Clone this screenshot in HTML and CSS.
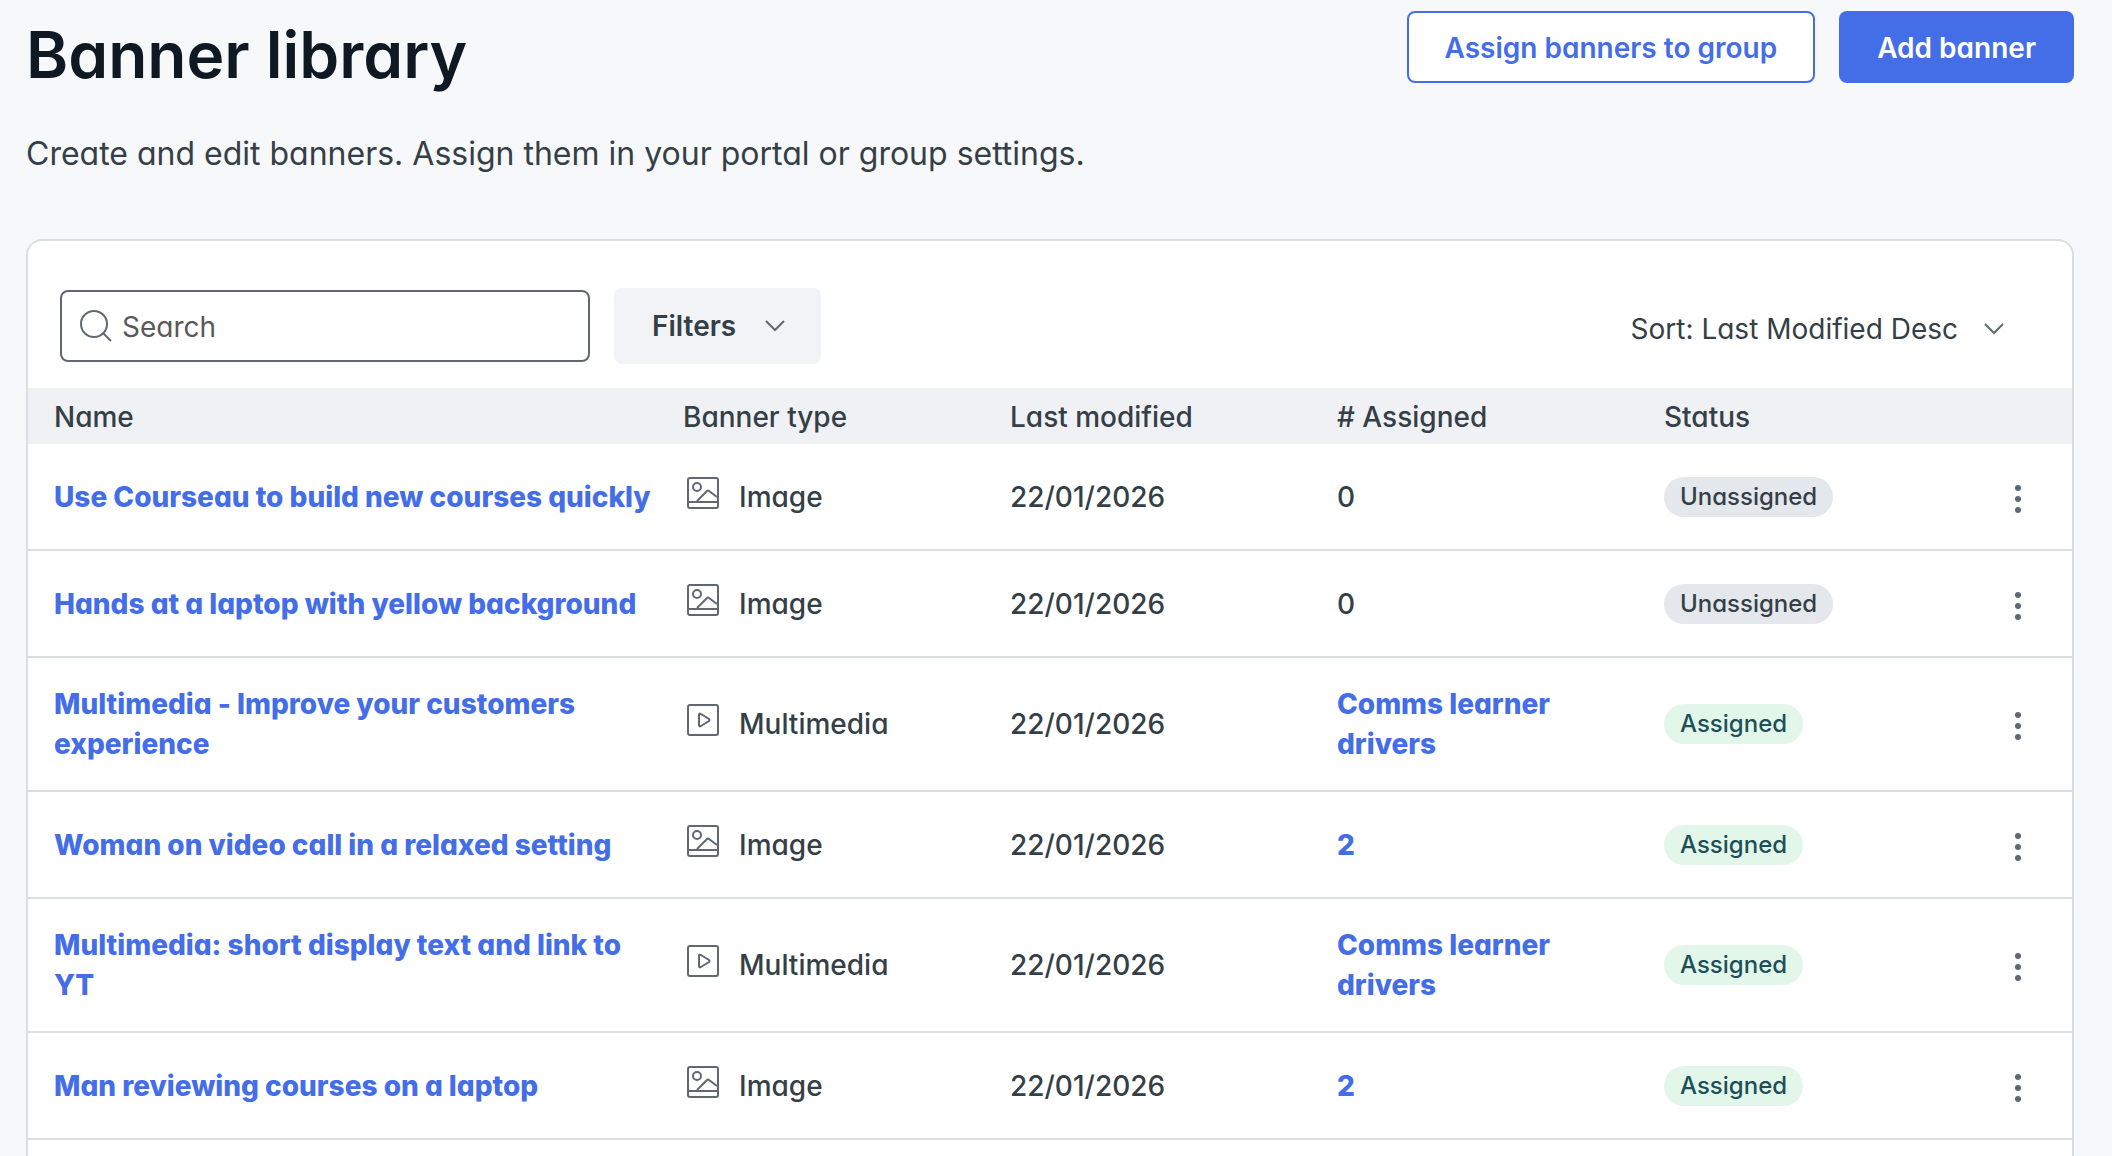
FILE: index.html
```
<!DOCTYPE html>
<html lang="en">

<head>
    <meta charset="UTF-8">
    <meta name="viewport" content="width=device-width, initial-scale=1.0">
    <title>Banner library</title>
    <link rel="stylesheet" href="styles.css">
</head>

<body>
    <!-- Shared icons -->
    <svg class="icon-defs" aria-hidden="true">
        <symbol id="icon-image" viewBox="0 0 32 32">
            <rect x="1" y="1" width="30" height="30" rx="2" />
            <circle cx="10" cy="10" r="4" />
            <path d="M1 25h30M10 24l10-10q1-1 2 0l8 6" />
        </symbol>
        <symbol id="icon-media" viewBox="0 0 32 32">
            <rect x="1" y="1" width="30" height="30" rx="2" />
            <path d="M12 11v10q0 2 2 1l8-5q1-1 0-2l-8-5q-2-1-2 1z" />
        </symbol>
        <symbol id="icon-search" viewBox="0 0 32 32">
            <circle cx="14" cy="14" r="13" />
            <path d="M23 23l8 8" />
        </symbol>
        <symbol id="icon-chevron" viewBox="0 0 20 12">
            <path d="M1 1l9 9 9-9" />
        </symbol>
        <symbol id="icon-dots" viewBox="0 0 6 28">
            <circle cx="3" cy="3" r="3" />
            <circle cx="3" cy="14" r="3" />
            <circle cx="3" cy="25" r="3" />
        </symbol>
    </svg>

    <header class="page-header">
        <h1>Banner library</h1>
        <div class="header-actions">
            <button type="button" class="btn btn-outline">Assign banners to group</button>
            <button type="button" class="btn btn-primary">Add banner</button>
        </div>
    </header>
    <p class="intro">Create and edit banners. Assign them in your portal or group settings.</p>

    <main class="card">
        <!-- Search, filters and sorting -->
        <div class="toolbar">
            <label class="search-box">
                <svg class="icon icon-search"><use href="#icon-search" /></svg>
                <input type="search" placeholder="Search" aria-label="Search">
            </label>
            <button type="button" class="btn btn-filters">Filters <svg class="icon icon-chevron"><use href="#icon-chevron" /></svg></button>
            <button type="button" class="btn-sort">Sort: Last Modified Desc <svg class="icon icon-chevron"><use href="#icon-chevron" /></svg></button>
        </div>

        <!-- Banner list -->
        <table class="banners">
            <thead>
                <tr>
                    <th class="col-name">Name</th>
                    <th class="col-data">Banner type</th>
                    <th class="col-data">Last modified</th>
                    <th class="col-data"># Assigned</th>
                    <th>Status</th>
                    <th class="col-menu" aria-label="Actions"></th>
                </tr>
            </thead>
            <tbody>
                <tr>
                    <td><a href="#">Use Courseau to build new courses quickly</a></td>
                    <td><span class="type"><svg class="icon icon-type"><use href="#icon-image" /></svg>Image</span></td>
                    <td>22/01/2026</td>
                    <td>0</td>
                    <td><span class="badge">Unassigned</span></td>
                    <td><button type="button" class="btn-menu" aria-label="Banner actions"><svg><use href="#icon-dots" /></svg></button></td>
                </tr>
                <tr>
                    <td><a href="#">Hands at a laptop with yellow background</a></td>
                    <td><span class="type"><svg class="icon icon-type"><use href="#icon-image" /></svg>Image</span></td>
                    <td>22/01/2026</td>
                    <td>0</td>
                    <td><span class="badge">Unassigned</span></td>
                    <td><button type="button" class="btn-menu" aria-label="Banner actions"><svg><use href="#icon-dots" /></svg></button></td>
                </tr>
                <tr>
                    <td><a href="#">Multimedia - Improve your customers experience</a></td>
                    <td><span class="type"><svg class="icon icon-type"><use href="#icon-media" /></svg>Multimedia</span></td>
                    <td>22/01/2026</td>
                    <td><a href="#">Comms learner drivers</a></td>
                    <td><span class="badge badge-assigned">Assigned</span></td>
                    <td><button type="button" class="btn-menu" aria-label="Banner actions"><svg><use href="#icon-dots" /></svg></button></td>
                </tr>
                <tr>
                    <td><a href="#">Woman on video call in a relaxed setting</a></td>
                    <td><span class="type"><svg class="icon icon-type"><use href="#icon-image" /></svg>Image</span></td>
                    <td>22/01/2026</td>
                    <td><a href="#">2</a></td>
                    <td><span class="badge badge-assigned">Assigned</span></td>
                    <td><button type="button" class="btn-menu" aria-label="Banner actions"><svg><use href="#icon-dots" /></svg></button></td>
                </tr>
                <tr>
                    <td><a href="#">Multimedia: short display text and link to YT</a></td>
                    <td><span class="type"><svg class="icon icon-type"><use href="#icon-media" /></svg>Multimedia</span></td>
                    <td>22/01/2026</td>
                    <td><a href="#">Comms learner drivers</a></td>
                    <td><span class="badge badge-assigned">Assigned</span></td>
                    <td><button type="button" class="btn-menu" aria-label="Banner actions"><svg><use href="#icon-dots" /></svg></button></td>
                </tr>
                <tr>
                    <td><a href="#">Man reviewing courses on a laptop</a></td>
                    <td><span class="type"><svg class="icon icon-type"><use href="#icon-image" /></svg>Image</span></td>
                    <td>22/01/2026</td>
                    <td><a href="#">2</a></td>
                    <td><span class="badge badge-assigned">Assigned</span></td>
                    <td><button type="button" class="btn-menu" aria-label="Banner actions"><svg><use href="#icon-dots" /></svg></button></td>
                </tr>
            </tbody>
        </table>
    </main>
</body>

</html>
```
FILE: styles.css
```
* {
    box-sizing: border-box;
}

body {
    display: flex;
    flex-direction: column;
    min-height: 100vh;
    margin: 0;
    padding: 11px 38px 0 26px;
    background-color: #f7f8fa;
    color: #353f47;
    font-family: Inter, "Liberation Sans", sans-serif;
    font-feature-settings: "cv11", "calt" 0;
    font-size: 28px;
    line-height: 40px;
}

button,
input {
    font: inherit;
    font-feature-settings: inherit;
    color: inherit;
}

button {
    cursor: pointer;
}

a {
    color: #446de8;
    font-weight: 800;
    text-decoration: none;
}

.icon-defs {
    position: absolute;
    width: 0;
    height: 0;
}

.icon {
    flex: none;
    fill: none;
    stroke: #616872;
    stroke-width: 2;
}

.icon-chevron {
    width: 20px;
    height: 12px;
}

/* Page header */
.page-header {
    display: flex;
    justify-content: space-between;
    align-items: flex-start;
}

h1 {
    margin: 0;
    color: #0f1924;
    font-size: 64px;
    font-weight: 600;
    line-height: 88px;
}

.header-actions {
    display: flex;
    gap: 24px;
}

.btn {
    height: 72px;
    padding: 2px 36px 0;
    border: 2px solid transparent;
    border-radius: 8px;
    font-weight: 600;
}

.btn-outline {
    background-color: #fff;
    border-color: #446de8;
    color: #446de8;
}

.btn-primary {
    background-color: #446de8;
    color: #fff;
}

.intro {
    margin: 33px 0 63px;
    font-size: 32px;
    line-height: 44px;
}

/* Card */
.card {
    flex: 1;
    border: 2px solid #dadee3;
    border-bottom: 0;
    border-radius: 16px 16px 0 0;
    background-color: #fff;
}

.toolbar {
    display: flex;
    align-items: center;
    gap: 24px;
    padding: 47px 68px 24px 32px;
}

.search-box {
    display: flex;
    align-items: center;
    gap: 10px;
    width: 530px;
    height: 72px;
    padding: 0 18px;
    border: 2px solid #616872;
    border-radius: 8px;
}

.icon-search {
    width: 32px;
    height: 32px;
}

.search-box input {
    flex: 1;
    min-width: 0;
    padding: 2px 0 0;
    border: 0;
    outline: 0;
    background: none;
}

.search-box input::placeholder {
    color: #595959;
    opacity: 1;
}

.btn-filters {
    display: flex;
    align-items: center;
    gap: 29px;
    height: 76px;
    padding: 0 34px 0 36px;
    background-color: #f2f3f7;
}

.btn-sort {
    display: flex;
    align-items: center;
    gap: 26px;
    margin-left: auto;
    padding: 5px 0 0;
    border: 0;
    background: none;
}

/* Table */
.banners {
    width: 100%;
    border-spacing: 0;
    table-layout: fixed;
}

.col-name {
    width: 629px;
}

.col-data {
    width: 327px;
}

.col-menu {
    width: 108px;
}

th {
    padding: 9px 4px 7px 26px;
    background-color: #f0f1f5;
    font-weight: 500;
    text-align: left;
}

td {
    height: 107px;
    padding: 26px 4px 26px 26px;
    border-bottom: 2px solid #dadee3;
    font-weight: 500;
}

td:last-child {
    padding: 4px 0 0;
    text-align: center;
}

.type {
    display: flex;
    align-items: center;
    gap: 20px;
    padding-left: 4px;
}

.icon-type {
    width: 32px;
    height: 32px;
    margin-bottom: 8px;
}

.badge {
    display: block;
    width: fit-content;
    padding: 0 16px;
    border-radius: 20px;
    background-color: #e4e7ec;
    font-size: 24px;
}

.badge-assigned {
    background-color: #e2f7ea;
    color: #1d5058;
}

.btn-menu {
    padding: 10px 16px;
    border: 0;
    background: none;
    line-height: 0;
}

.btn-menu svg {
    width: 6px;
    height: 28px;
    fill: #616872;
}
```
